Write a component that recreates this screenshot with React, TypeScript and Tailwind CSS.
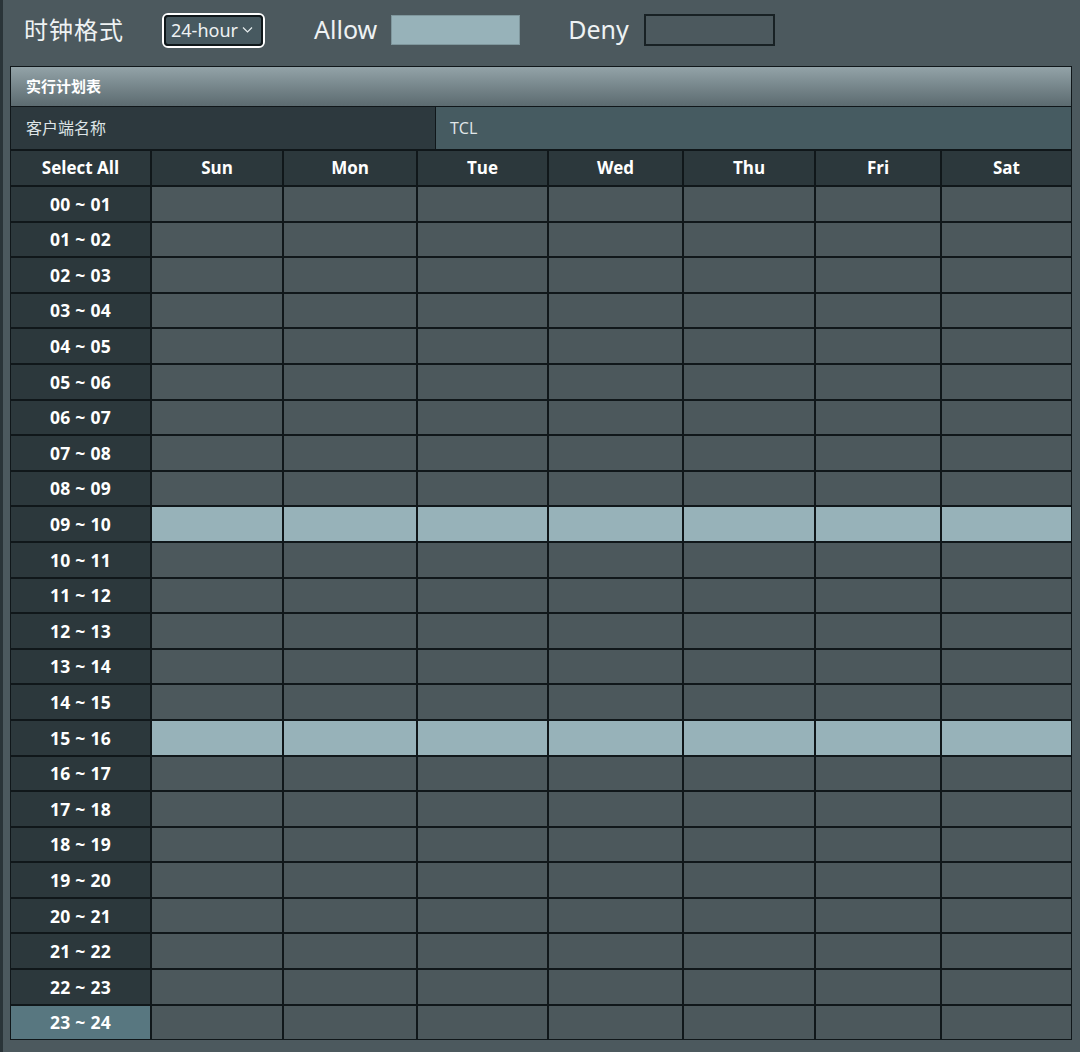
import React from "react";

const days = ["Sun", "Mon", "Tue", "Wed", "Thu", "Fri", "Sat"];
const allowed = [9, 15];

const pad = (n: number) => String(n).padStart(2, "0");

const App = () => {
  return (
    <div
      className="w-[1080px] h-[1052px] bg-[#4c595e] border-l-[3px] border-[#2a3438] text-white overflow-hidden"
      style={{ fontFamily: '"Open Sans", "Noto Sans", "Noto Sans CJK SC", sans-serif' }}
    >
      {/* top bar */}
      <div className="flex items-center h-[60px] pl-[21px]">
        <span className="text-[24px] tracking-[1px] text-[#eef2f3]">时钟格式</span>
        <div className="ml-[38px] flex items-center h-[35px] w-[103px] rounded-[6px] border-2 border-white">
          <div className="flex items-center gap-[4px] w-full h-full rounded-[4px] border-2 border-[#10181b] bg-[#475960] pl-[5px]">
            <span className="text-[18px] text-[#eef2f3]" style={{ fontFamily: '"Noto Sans", sans-serif' }}>24-hour</span>
            <svg width="11" height="8" viewBox="0 0 11 8" fill="none">
              <path d="M1 1.5 L5.5 6 L10 1.5" stroke="#e6eced" strokeWidth="1.2" />
            </svg>
          </div>
        </div>
        <span className="ml-[49px] text-[25px] text-[#eef2f3]" style={{ fontFamily: '"Noto Sans", sans-serif' }}>Allow</span>
        <div className="ml-[14px] w-[129px] h-[30px] bg-[#97b2b9] border border-[#7f979d]" />
        <span className="ml-[48px] text-[25px] text-[#eef2f3]" style={{ fontFamily: '"Noto Sans", sans-serif' }}>Deny</span>
        <div className="ml-[15px] w-[131px] h-[32px] border-2 border-[#182124]" />
      </div>

      {/* schedule panel */}
      <div className="ml-[7px] mt-[6px] w-[1062px] flex flex-col bg-[#10171a] border border-[#10171a] gap-[1px]">
        <div className="h-[39px] flex items-center pl-[15px] bg-gradient-to-b from-[#93a3a8] to-[#5c6b70]">
          <span className="text-[15px] font-bold text-white">实行计划表</span>
        </div>
        <div className="flex h-[42px] gap-[1px]">
          <div className="w-[424px] flex items-center pl-[15px] bg-[#2d393e] text-[16px] text-[#dde4e6]">客户端名称</div>
          <div className="flex-1 flex items-center pl-[14px] bg-[#465b61] text-[16px] text-[#e2e8ea]">TCL</div>
        </div>
        <div className="grid grid-cols-[139px_130px_132px_129px_133px_130px_124px_129px] gap-[2px] mt-[1px]">
          <div className="h-[34px] flex items-center justify-center bg-[#2c383c] text-[17px] font-bold">Select All</div>
          {days.map((d) => (
            <div key={d} className="h-[34px] flex items-center justify-center bg-[#2c383c] text-[17px] font-bold">
              {d}
            </div>
          ))}
          {Array.from({ length: 24 }, (_, h) => (
            <React.Fragment key={h}>
              <div
                className={`h-[33.6px] flex items-center justify-center text-[17.5px] font-bold tracking-[0.3px] ${
                  h === 23 ? "bg-[#587780]" : "bg-[#2c383c]"
                }`}
              >
                {pad(h)} ~ {pad(h + 1)}
              </div>
              {days.map((d) => (
                <div
                  key={d}
                  className={`h-[33.6px] ${allowed.includes(h) ? "bg-[#97b2b9]" : "bg-[#4c585c]"}`}
                />
              ))}
            </React.Fragment>
          ))}
        </div>
      </div>
    </div>
  );
};

export default App;
